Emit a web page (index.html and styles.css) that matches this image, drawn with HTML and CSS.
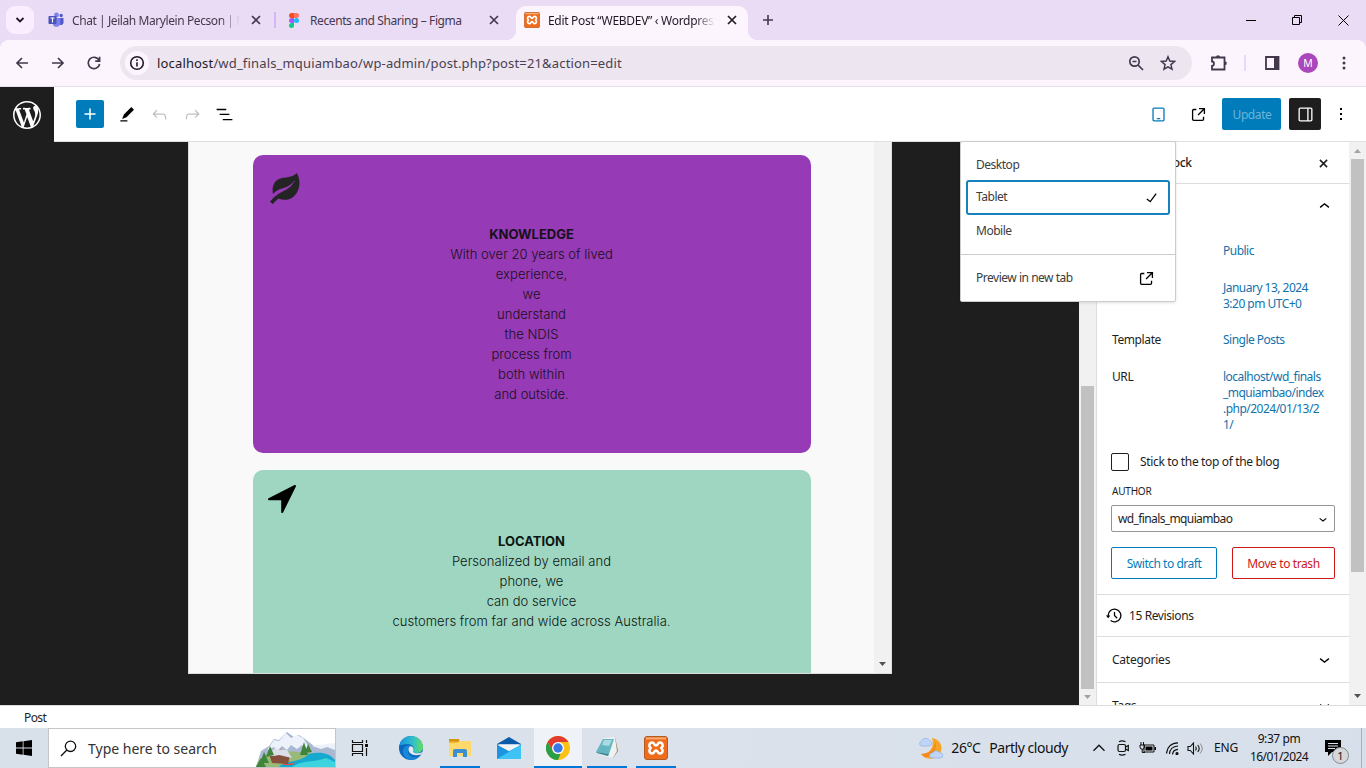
FILE: index.html
```html
<!DOCTYPE html>
<html lang="en">
<head>
<meta charset="utf-8">
<title>Edit Post “WEBDEV” ‹ Wordpress</title>
<link rel="stylesheet" href="styles.css">
</head>
<body>
<svg class="defs" width="0" height="0" aria-hidden="true">
  <symbol id="external" viewBox="0 0 24 24"><path d="M19.5 4.5h-7V6h4.44l-5.97 5.97 1.06 1.06L18 7.06v4.44h1.5v-7Zm-13 1a2 2 0 0 0-2 2v10a2 2 0 0 0 2 2h10a2 2 0 0 0 2-2v-3H17v3a.5.5 0 0 1-.5.5h-10a.5.5 0 0 1-.5-.5v-10a.5.5 0 0 1 .5-.5h3V5.5h-3Z"/></symbol>
  <symbol id="down" viewBox="0 0 24 24"><path d="M17.5 11.6L12 16l-5.5-4.4.9-1.2L12 14l4.5-3.6 1 1.2z"/></symbol>
  <symbol id="cross" viewBox="0 0 10 10"><path d="M1 1l8 8M9 1l-8 8" fill="none" stroke="currentColor" stroke-width="1.7"/></symbol>
  <symbol id="xampp" viewBox="0 0 24 24"><rect x=".5" y=".5" width="23" height="23" rx="2.5" fill="#ee6c1b" stroke="#b65a20"/><path d="M2 1.5h20v1.8H2z" fill="#f7b07c"/><path d="M8.200 6.500c-3 0-3.700 3.500-1.700 5.500-2 2-1.300 5.500 1.700 5.500 2.300 0 1.800-3 3.800-3s1.500 3 3.800 3c3 0 3.700-3.500 1.700-5.500 2-2 1.300-5.500-1.700-5.500-2.300 0-1.800 3-3.800 3s-1.500-3-3.800-3z" fill="none" stroke="#fff" stroke-width="2.600"/></symbol>
</svg>

<div class="tabstrip">
  <div class="tab-search"><svg width="10" height="8" viewBox="0 0 10 8"><path d="M1.500 2L5 5.500 8.500 2" fill="none" stroke="#1f1a26" stroke-width="1.800"/></svg></div>
  <div class="tab tab-teams">
    <svg width="16" height="16" viewBox="0 0 16 16"><circle cx="8.500" cy="3" r="2.400" fill="#7b83eb"/><circle cx="13.200" cy="3.500" r="1.700" fill="#5059c9"/><path d="M11 6h4.500v5a2.500 2.500 0 01-4.500 1z" fill="#5059c9"/><path d="M5 6h7.300v5.500a4 4 0 01-7.300 1.500z" fill="#7b83eb"/><rect x=".5" y="4" width="8" height="8" rx=".8" fill="#4b53bc"/><path d="M2.500 6h4M4.500 6v4.500" stroke="#fff" stroke-width="1.100"/></svg>
    <span class="tab-title fade t-chat">Chat | Jeilah Marylein Pecson | M</span>
    <svg class="x" width="10" height="10"><use href="#cross"/></svg>
  </div>
  <i class="tab-sep"></i>
  <div class="tab tab-figma">
    <svg width="10" height="15" viewBox="0 0 10 15"><path d="M5 0H2.500a2.500 2.500 0 000 5H5z" fill="#f24e1e"/><path d="M5 0h2.500a2.500 2.500 0 010 5H5z" fill="#ff7262"/><path d="M5 5H2.500a2.500 2.500 0 000 5H5z" fill="#a259ff"/><circle cx="7.500" cy="7.500" r="2.500" fill="#1abcfe"/><path d="M5 10H2.500A2.500 2.500 0 105 12.500z" fill="#0acf83"/></svg>
    <span class="tab-title t-figma">Recents and Sharing – Figma</span>
    <svg class="x" width="10" height="10"><use href="#cross"/></svg>
  </div>
  <div class="tab tab-active">
    <svg width="16" height="16"><use href="#xampp"/></svg>
    <span class="tab-title fade t-edit">Edit Post “WEBDEV” ‹ Wordpress</span>
    <svg class="x" width="10" height="10"><use href="#cross"/></svg>
  </div>
  <svg class="newtab" width="12" height="12" viewBox="0 0 12 12"><path d="M6 1v10M1 6h10" stroke="#44394c" stroke-width="1.600"/></svg>
  <div class="window-buttons">
    <svg width="10" height="10"><path d="M0 5.500h10" stroke="#000"/></svg>
    <svg width="10" height="10" fill="none" stroke="#000"><path d="M.5 2.500h7v7h-7zM2.500 2.500v-2h7v7h-2"/></svg>
    <svg width="11" height="11" stroke="#000"><path d="M.5.5l10 10M10.500.5l-10 10"/></svg>
  </div>
</div>

<div class="toolbar">
  <svg width="14" height="14" viewBox="0 0 14 14" class="ln"><path d="M13 7H2M7 2L2 7l5 5"/></svg>
  <svg width="14" height="14" viewBox="0 0 14 14" class="ln"><path d="M1 7h11M7 2l5 5-5 5"/></svg>
  <svg width="14" height="14" viewBox="0 0 14 14" class="ln"><path d="M12 4.200A5.700 5.700 0 1012.600 8M12.600.8v4.400H8.200"/></svg>
  <div class="omnibox">
    <span class="info"><svg width="16" height="16" viewBox="0 0 16 16" fill="none" stroke="#1f1a26" stroke-width="1.600"><circle cx="8" cy="8" r="6.300"/><path d="M8 7.200V11.500M8 4.300v1.600"/></svg></span>
    <span class="url"><b>localhost</b>/wd_finals_mquiambao/wp-admin/post.php?post=21&amp;action=edit</span>
    <svg class="ln" width="16" height="16" viewBox="0 0 16 16"><circle cx="6.500" cy="6.500" r="4.700"/><path d="M10 10l5 5M4.500 6.500h4"/></svg>
    <svg class="ln star" width="16" height="16" viewBox="0 0 16 16"><path d="M8 1.800l1.800 4.300 4.700.4-3.600 3.100 1.100 4.600L8 11.800l-4 2.400 1.100-4.600-3.600-3.100 4.700-.4z"/></svg>
  </div>
  <svg class="ln puzzle" width="18" height="18" viewBox="0 0 18 18"><path d="M2 3.500h12.500v12H2v-3.700c2.600-.2 2.600-4.100 0-4.300z"/><path d="M6 3.200a2 2 0 014 0zM14.800 7.200a2 2 0 010 4z" fill="#44394c" stroke="none"/></svg>
  <i class="tool-sep"></i>
  <svg class="panel" width="15" height="14" viewBox="0 0 15 14"><path d="M1 1h12.500v12H1z" fill="none" stroke="#44394c" stroke-width="1.800"/><path d="M9 1h5v12H9z" fill="#44394c"/></svg>
  <span class="avatar">M</span>
  <svg class="kebab" width="4" height="14" viewBox="0 0 4 14"><circle cx="2" cy="2" r="1.500"/><circle cx="2" cy="7" r="1.500"/><circle cx="2" cy="12" r="1.500"/></svg>
</div>

<div class="wp-header">
  <div class="wp-logo"><svg width="28" height="28" viewBox="0 0 20 20" fill="#fff"><path d="M20 10c0-5.510-4.490-10-10-10C4.480 0 0 4.490 0 10c0 5.520 4.480 10 10 10 5.510 0 10-4.480 10-10zM7.780 15.370L4.370 6.220c.55-.02 1.170-.08 1.170-.08.5-.06.44-1.130-.06-1.110 0 0-1.450.11-2.370.11-.18 0-.37 0-.58-.01C4.120 2.690 6.870 1.110 10 1.110c2.330 0 4.450.87 6.050 2.340-.68-.11-1.650.39-1.650 1.580 0 .74.45 1.360.9 2.100.35.61.55 1.360.55 2.460 0 1.490-1.400 5-1.400 5l-3.030-8.370c.54-.02.82-.17.82-.17.5-.05.44-1.250-.06-1.220 0 0-1.440.12-2.380.12-.87 0-2.330-.12-2.330-.12-.5-.03-.56 1.200-.06 1.220l.92.08 1.260 3.410zM17.410 10c.24-.64.74-1.870.43-4.250.7 1.290 1.050 2.710 1.050 4.250 0 3.290-1.730 6.240-4.400 7.780.97-2.590 1.940-5.200 2.920-7.780zM6.100 18.090C3.120 16.650 1.110 13.530 1.110 10c0-1.300.23-2.480.72-3.590C3.250 10.300 4.670 14.200 6.100 18.090zm4.030-6.630l2.580 6.980c-.86.29-1.760.45-2.710.45-.79 0-1.570-.11-2.290-.33.81-2.380 1.620-4.740 2.420-7.100z"/></svg></div>
  <div class="edit-tools">
    <button class="add"><svg width="12" height="12"><path d="M6 .5v11M.5 6h11" stroke="#fff" stroke-width="1.500"/></svg></button>
    <svg class="pencil" width="21" height="21" viewBox="0 0 24 24"><path d="M20.500 6.500l-3-3-8.500 8.500-2 5 5-2 8.500-8.500ZM13 18.500H5V20h8v-1.500Z"/></svg>
    <svg class="off" width="21" height="21" viewBox="0 0 24 24"><path d="M18.300 11.700c-.6-.6-1.400-.9-2.300-.9H6.700l2.900-3.300-1.100-1-4.500 5L8.500 16l1-1-2.700-2.700H16c.5 0 .9.200 1.300.5 1 1 1 3.400 1 4.500v.3h1.500v-.2c0-1.500 0-4.300-1.500-5.700z"/></svg>
    <svg class="off" width="21" height="21" viewBox="0 0 24 24"><path d="M15.600 6.500l-1.100 1 2.900 3.300H8c-.9 0-1.700.3-2.300.9-1.400 1.500-1.400 4.200-1.400 5.600v.2h1.500v-.3c0-1.100 0-3.500 1-4.500.3-.3.7-.5 1.300-.5h9.200L14.500 15l1.100 1.100 4.600-4.600-4.600-5z"/></svg>
    <svg class="outline" width="21" height="21" viewBox="0 0 24 24"><path d="M3 5.500h11V7H3V5.500Zm3.500 5.500h11v1.700h-11V11ZM21 17H10v1.700h11V17Z"/></svg>
  </div>
  <div class="view-tools">
    <svg class="tablet" width="21" height="21" viewBox="0 0 24 24"><path d="M17 4H7c-1.100 0-2 .9-2 2v12c0 1.100.9 2 2 2h10c1.100 0 2-.9 2-2V6c0-1.100-.9-2-2-2zm.5 14c0 .3-.2.5-.5.5H7c-.3 0-.5-.2-.5-.5V6c0-.3.2-.5.5-.5h10c.3 0 .5.2.5.5v12zm-7.500-.5h4V16h-4v1.500z"/></svg>
    <svg class="ext" width="21" height="21"><use href="#external"/></svg>
    <button class="update"><span>Update</span></button>
    <button class="settings"><svg width="21" height="21" viewBox="0 0 24 24" fill="#fff"><path d="M18 4H6c-1.100 0-2 .9-2 2v12c0 1.100.9 2 2 2h12c1.100 0 2-.9 2-2V6c0-1.100-.9-2-2-2zm-4 14.500H6c-.3 0-.5-.2-.5-.5V6c0-.3.2-.5.5-.5h8v13zm4.500-.5c0 .3-.2.5-.5.5h-2.500v-13H18c.3 0 .5.200.5.5v12z"/></svg></button>
    <svg class="more" width="4" height="14"><path d="M1 1h2v2H1zM1 6h2v2H1zM1 11h2v2H1z"/></svg>
  </div>
  <div class="menu">
    <div class="item">Desktop</div>
    <div class="item chosen">Tablet<svg width="21" height="21" viewBox="0 0 24 24"><path d="M16.700 7.100l-6.300 8.500-3.300-2.500-.9 1.200 4.500 3.400L17.900 8z"/></svg></div>
    <div class="item mobile">Mobile</div>
    <div class="item preview">Preview in new tab<svg width="21" height="21"><use href="#external"/></svg></div>
  </div>
</div>

<div class="main">
  <div class="canvas">
    <div class="frame">
      <div class="page">
        <section class="card purple">
          <svg class="leaf" width="30" height="31" viewBox="0 0 30 31"><path d="M26.800 0c3.400 6 3.800 13.600-.3 20.200-4.300 6.500-11.300 8.200-18.200 5.300L2.700 31 0 28.800c3.500-4.700 7.700-7.800 13.300-10.500 5-2.500 9.600-5.900 11.800-11.600C21.500 12 17.100 14 12 15.600c-4 1.300-6.800 3-9 5.300C1.700 14.400 3.600 8.600 9 6.100 14.800 3.700 22.500 4.900 26.800 0z" fill="#242424"/></svg>
          <h3>KNOWLEDGE</h3>
          <p>With over 20 years of lived<br>experience,<br>we<br>understand<br>the NDIS<br>process from<br>both within<br>and outside.</p>
        </section>
        <section class="card green">
          <svg class="arrow" width="28" height="28" viewBox="0 0 28 28"><path d="M1 14.200L27 1 14.200 27V14.200z" stroke="#000" stroke-width="2" stroke-linejoin="round"/></svg>
          <h3>LOCATION</h3>
          <p>Personalized by email and<br>phone, we<br>can do service<br>customers from far and wide across Australia.</p>
        </section>
      </div>
      <div class="bar frame-bar"><svg width="7" height="4"><path d="M0 0h7L3.500 4z" fill="#505050"/></svg></div>
    </div>
  </div>
  <div class="bar canvas-bar"><i></i><svg width="7" height="4"><path d="M0 0h7L3.500 4z" fill="#a3a3a3"/></svg></div>
  <aside class="sidebar">
    <div class="side-tabs"><span>Post</span><span class="block">Block</span><svg width="9" height="9" viewBox="0 0 10 10"><use href="#cross"/></svg></div>
    <div class="summary">
      <div class="summary-head"><span>Summary</span><svg width="21" height="21" viewBox="0 0 24 24"><path d="M6.500 12.400L12 8l5.500 4.400-.9 1.200L12 10l-4.500 3.600-1-1.200z"/></svg></div>
      <div class="row r-vis"><span>Visibility</span><a>Public</a></div>
      <div class="row r-pub"><span>Publish</span><a>January 13, 2024<br>3:20 pm UTC+0</a></div>
      <div class="row r-tpl"><span>Template</span><a>Single Posts</a></div>
      <div class="row r-url"><span>URL</span><a>localhost/wd_finals<br>_mquiambao/index<br>.php/2024/01/13/2<br>1/</a></div>
      <div class="stick"><i></i><span>Stick to the top of the blog</span></div>
      <div class="author-label">AUTHOR</div>
      <div class="select"><span>wd_finals_mquiambao</span><svg width="16" height="16"><use href="#down"/></svg></div>
      <div class="actions"><button class="draft">Switch to draft</button><button class="trash">Move to trash</button></div>
    </div>
    <div class="revisions"><svg width="21" height="21" viewBox="0 0 24 24"><path d="M5.500 12h1.750l-2.500 3-2.500-3H4a8 8 0 113.134 6.350l.907-1.194A6.500 6.500 0 105.500 12zm9.530 1.970l-2.280-2.280V8.500a.75.75 0 00-1.500 0V12a.747.747 0 00.218.529l2.500 2.500a.75.75 0 101.060-1.061z"/></svg><span>15 Revisions</span></div>
    <div class="fold"><span>Categories</span><svg width="21" height="21"><use href="#down"/></svg></div>
    <div class="fold"><span>Tags</span><svg width="21" height="21"><use href="#down"/></svg></div>
  </aside>
  <div class="bar side-bar"><svg width="7" height="4"><path d="M0 4h7L3.500 0z" fill="#a3a3a3"/></svg><i></i><svg class="end" width="7" height="4"><path d="M0 0h7L3.500 4z" fill="#505050"/></svg></div>
</div>

<div class="crumbs"><span>Post</span></div>

<div class="taskbar">
  <div class="start"><svg width="16" height="16" viewBox="0 0 16 16"><path d="M0 2.200L6.700 1.300v6.300H0zM7.500 1.200L16 0v7.600H7.500zM0 8.400h6.700v6.300L0 13.800zM7.500 8.400H16V16l-8.500-1.200z"/></svg></div>
  <div class="search">
    <svg width="17" height="17" viewBox="0 0 17 17" fill="none" stroke="#111" stroke-width="1.300"><circle cx="10.500" cy="6.300" r="5.200"/><path d="M6.800 10L1 16"/></svg>
    <span>Type here to search</span>
    <svg class="scene" width="79" height="35" viewBox="0 0 79 35"><path d="M0 35L5 19l8-5 5-7 5 1 8-8 7 5 5-2 6 4 9 7 22-2v23z" fill="#aab8d2"/><path d="M18 8l-7 10 7-3 3 4 5-5 5 4 4-5 6 4 5-4 9 5-8-12-6-3-6 3-5-5-7 8zM56 14l23-3v7l-8-3-6 2z" fill="#edf1fa"/><path d="M0 35c4-15 18-18 56-14l-7 14z" fill="#98b978"/><path d="M23 35c6-8 20-3 30-13 10-3 21-1 26 6v7z" fill="#16a9cf"/><path d="M36 35c9-7 26-5 34-9l9 4v5z" fill="#3dd4df"/><path d="M13 22l12-5 9 6-2 9-16-1z" fill="#85513c"/><path d="M11 24l7-7 13 1 5 8-13-3-5 1z" fill="#dbe0e8"/><path d="M26 31c4 2 8 1 13-1l-3 3h-8z" fill="#eb4632"/><path d="M4 31l4-11 5 11zM10 25l4-11 4 9zM44 23l4-13 4 13zM49 21l3-9 4 8zM0 35l5-9 5 9z" fill="#3e853b"/></svg>
  </div>
  <div class="task taskview"><svg width="18" height="16" viewBox="0 0 18 16" fill="none" stroke="#111" stroke-width="1.200"><path d="M1.500 4.500h10v7h-10zM1.500 0v2.500h10V0M1.500 16v-2.500h10V16M15.500 0v3M15.500 8v8"/><path d="M14 4h3v3h-3z" fill="#111" stroke="none"/></svg></div>
  <div class="task"><svg width="24" height="24" viewBox="0 0 24 24"><defs><linearGradient id="eg" x1="0" x2="1"><stop offset=".1" stop-color="#1a9bdc"/><stop offset=".6" stop-color="#35c1c8"/><stop offset="1" stop-color="#62e05d"/></linearGradient></defs><circle cx="12" cy="12" r="12" fill="#0b67bd"/><path d="M.6 9C2.500 2.800 7 0 12 0c7 0 12 5.500 12 11 0 4-3 6-6.500 6-3 0-4.500-1-3.600-2.400C16 12 13.500 8 8.500 8 5 8 2 9.500.6 9z" fill="url(#eg)"/><path d="M9.500 12.500C7 18 13 23.500 20 20.500c-4 5-13 4.300-15.500-2C2.500 13 6 9 11 9.300c-1 .7-1.300 2-1.500 3.200z" fill="#1688d8"/><path d="M10.500 10.500c-3.500 5 2.500 11 11.500 8l1.500-2.500c-4 2-9 1.500-9.600-.5-.2-.8.800-1.200.5-2.700-.3-1.800-2-3.300-3.900-2.300z" fill="#e2e9f0"/></svg></div>
  <div class="task run"><svg width="22" height="20" viewBox="0 0 22 20"><path d="M0 2a1 1 0 011-1h8l2 2h10a1 1 0 011 1v14H0z" fill="#f4b92b"/><path d="M0 1h10v2.500H0z" fill="#d39510"/><path d="M0 5h8l3-2h11v15H0z" fill="#ffd96b"/><path d="M4 19v-6a2 2 0 012-2h10a2 2 0 012 2v6h-4v-4H8v4z" fill="#3a8fd4"/></svg></div>
  <div class="task"><svg width="24" height="24" viewBox="0 0 24 24"><path d="M0 8l12-7 12 7v8H0z" fill="#0a5cab"/><path d="M2 8.500h20V15H2z" fill="#fff"/><path d="M0 8.500l12 6.500 12-6.500V23H0z" fill="#1b95e0"/><path d="M24 8.500L0 23h24z" fill="#3dc3f5"/><path d="M0 8.500h24L12 15z" fill="#f1f5f8"/></svg></div>
  <div class="task run current"><svg width="24" height="24" viewBox="0 0 24 24"><circle cx="12" cy="12" r="12" fill="#fbc116"/><path d="M1.600 6A12 12 0 0122.400 6H12l-5.200 9z" fill="#e33b2e"/><path d="M1.600 6l5.200 9a6 6 0 005.200 3h2.500L12 24A12 12 0 011.600 6z" fill="#2b9e48"/><circle cx="12" cy="12" r="6" fill="#fff"/><circle cx="12" cy="12" r="4.700" fill="#3878e7"/></svg></div>
  <div class="task run note"><svg width="24" height="22" viewBox="0 0 24 22"><path d="M20 0l3 14-5 7-2-2z" fill="#927b52"/><path d="M9 1l11-1 2 14-4 7-12-3z" fill="#edf2f2"/><path d="M8 2h11l-5 15-13-2z" fill="#65b5c2"/><path d="M9 3h8l-3 6-7-1z" fill="#a9dce2"/><path d="M1 15l13 2-1 2-11-3z" fill="#34818e"/></svg></div>
  <div class="task run"><svg width="24" height="24"><use href="#xampp"/></svg></div>
  <div class="weather">
    <svg width="25" height="23" viewBox="0 0 25 23"><path d="M13 1c8 1 12 9 8 15-4 7-14 8-19 1 8 0 14-6 11-16z" fill="#f5a623"/><path d="M2 17c8 0 14-5 14-13 3 7-1 15-10 16.500z" fill="#f68a1d"/><path d="M2 9a2.800 2.800 0 01.5-5 4.500 4.500 0 018-.5A2.900 2.900 0 0111 9zM13 21a2.500 2.500 0 01.3-5 4.500 4.500 0 017.700 0 2.500 2.500 0 01.5 5z" fill="#bfd5f7" stroke="#86a9e2" stroke-width=".6"/></svg>
    <span class="temp">26°C</span><span class="cond">Partly cloudy</span>
  </div>
  <div class="tray">
    <svg width="12" height="8" fill="none" stroke="#111" stroke-width="1.300"><path d="M.5 6.800L6 1.200l5.500 5.600"/></svg>
    <svg class="cam" width="12" height="16" viewBox="0 0 12 16" fill="none" stroke="#111" stroke-width="1.200"><rect x="1" y="4.500" width="7.500" height="7" rx="1.500"/><path d="M8.500 7l2.800-1.500v5L8.500 9M2 1.800Q5 0 8.500 1.800M2 14.200Q5 16 8.500 14.200"/></svg>
    <svg class="bat" width="17" height="12" viewBox="0 0 17 12"><path d="M5 3h10v7H5z" fill="none" stroke="#111"/><path d="M6.500 4.500h7v4h-7zM15.500 5H17v3h-1.500z"/><path d="M2 0v3M4.500 0v3M1 3h4.500v2a2 2 0 01-4.500 0zM3.200 7v3.500H6" fill="none" stroke="#111"/></svg>
    <svg class="wifi" width="13" height="13" viewBox="0 0 13 13" fill="none" stroke="#111" stroke-width="1.200"><path d="M.5 11.500C1 5 5.500 1 12 .8M3.500 12c.3-4.500 3.500-7.700 8.500-8M6.500 12.500c.3-3 2.500-5 5.500-5.200"/><circle cx="11" cy="11.500" r="1" fill="#111"/></svg>
    <svg class="vol" width="17" height="13" viewBox="0 0 17 13" fill="none" stroke="#111" stroke-width="1.100"><path d="M1 4.500h2.300L6.500 1v11L3.300 8.500H1zM8.500 4.500q1.500 2 0 4M10.700 3q3 3.500 0 7"/><path d="M13 1.500q4.500 5 0 10" stroke="#999"/></svg>
    <span class="lang">ENG</span>
    <div class="clock"><span class="time">9:37 pm</span><span class="date">16/01/2024</span></div>
    <div class="notes"><svg width="17" height="16" viewBox="0 0 17 16"><path d="M0 0h16v12H7l-4 4v-4H0z"/><path d="M3 3.500h10M3 6h10M3 8.500h7" stroke="#dce3ec"/></svg><span class="badge">1</span></div>
    <i class="peek"></i>
  </div>
</div>
</body>
</html>
```
FILE: styles.css
```css
* { box-sizing: border-box; }
body { margin: 0; width: 1366px; height: 768px; overflow: hidden; background: #fff; font: 12px/16px "Noto Sans", "Open Sans", sans-serif; color: #1e1e1e; }
svg { display: block; flex: none; }
button { font: inherit; margin: 0; padding: 0; border: 0; display: flex; align-items: center; justify-content: center; }
.defs { position: absolute; }
span, a { white-space: nowrap; }

.tabstrip { height: 40px; background: #ebdcf5; display: flex; align-items: center; padding-left: 6px; color: #44394c; }
.tab-search { width: 28px; height: 28px; border-radius: 9px; background: #faeefe; display: flex; align-items: center; justify-content: center; margin-right: 14px; }
.tab { display: flex; align-items: center; height: 40px; }
.tab-title { margin-left: 8px; overflow: hidden; line-height: 18px; padding-top: 1px; }
.fade { -webkit-mask-image: linear-gradient(90deg, #000 88%, transparent); }
.x { margin-left: auto; }
.tab-teams { width: 213px; }
.t-chat { width: 168px; letter-spacing: -.42px; }
.tab-sep { width: 2px; height: 16px; background: #d3b6f8; margin-left: 13px; }
.tab-figma { width: 210px; margin-left: 13px; }
.t-figma { margin-left: 11px; letter-spacing: -.4px; }
.tab-active { width: 232px; height: 34px; align-self: flex-end; background: #fdf5fe; border-radius: 10px 10px 0 0; margin-left: 17px; padding: 0 11px 6px 8px; position: relative; color: #1f1a26; }
.tab-active::before, .tab-active::after { content: ""; position: absolute; bottom: 0; width: 10px; height: 10px; }
.tab-active::before { left: -10px; background: radial-gradient(circle at 0 0, transparent 10px, #fdf5fe 10.5px); }
.tab-active::after { right: -10px; background: radial-gradient(circle at 100% 0, transparent 10px, #fdf5fe 10.5px); }
.t-edit { width: 167px; letter-spacing: -.3px; }
.newtab { margin-left: 14px; }
.window-buttons { margin-left: auto; display: flex; align-items: center; gap: 36px; padding-right: 17px; }

.toolbar { height: 47px; background: radial-gradient(circle at 100% 100%, #fdf5fe 7.5px, #ebdcf5 8px) 0 0/8px 8px no-repeat, radial-gradient(circle at 0 100%, #fdf5fe 7.5px, #ebdcf5 8px) 100% 0/8px 8px no-repeat, #fdf5fe; border-bottom: 1px solid #e6deea; display: flex; align-items: center; padding-left: 15px; }
.ln { fill: none; stroke: #44394c; stroke-width: 1.7; margin-right: 22px; }
.omnibox { width: 1072px; height: 34px; border-radius: 17px; background: #ede5f0; display: flex; align-items: center; padding-left: 5px; margin-left: -3px; }
.info { width: 24px; height: 24px; border-radius: 50%; background: #fdf5fe; display: flex; align-items: center; justify-content: center; }
.url { margin: 0 auto 0 8px; font-size: 13px; color: #4a4150; letter-spacing: .16px; }
.url b { font-weight: 400; color: #1f1a26; }
.omnibox .ln { margin-right: 16px; }
.omnibox .star { stroke-width: 1.5; }
.puzzle { margin: 0 0 0 18px; stroke-width: 1.8; }
.tool-sep { width: 2px; height: 16px; background: #e9d8fb; margin-left: 16px; }
.panel { margin-left: 19px; }
.avatar { width: 20px; height: 20px; border-radius: 50%; background: #aa47bc; color: #fff; font-size: 10.5px; line-height: 20px; text-align: center; margin-left: 18px; }
.kebab { margin-left: 24px; fill: #44394c; }

.wp-header { height: 55px; border-bottom: 1px solid #dfdfdf; display: flex; align-items: center; position: relative; background: #fff; }
.wp-logo { width: 54px; height: 55px; background: #1e1e1e; display: flex; align-items: center; justify-content: center; align-self: flex-start; flex: none; }
.edit-tools { display: flex; align-items: center; gap: 12px; margin-left: 22px; }
.add { width: 28px; height: 28px; background: #007cba; border-radius: 2px; }
.off { fill: #c0c0c0; }
.outline { margin-left: -1px; }
.view-tools { display: flex; align-items: center; margin-left: auto; padding-right: 23px; }
.tablet { fill: #007cba; }
.ext { margin-left: 19px; }
.update { width: 59px; height: 32px; background: #007cba; border-radius: 2px; color: #6cb3d8; margin-left: 13px; padding: 2px 0 0 1px; letter-spacing: -.4px; }
.settings { width: 32px; height: 32px; background: #1e1e1e; border-radius: 2px; margin-left: 8px; }
.more { margin-left: 18px; }
.menu { position: absolute; left: 960px; top: 54px; width: 216px; height: 161px; background: #fff; border: 1px solid #ccc; border-radius: 2px; box-shadow: 0 1px 3px rgba(0,0,0,.12); padding: 7px 5px 0; z-index: 3; color: #3c3c3c; display: flex; flex-direction: column; }
.item { height: 31px; padding: 2px 9px 0 10px; display: flex; align-items: center; justify-content: space-between; letter-spacing: -.48px; }
.chosen { height: 36px; border: 2px solid #1582bd; border-radius: 3px; padding: 0 6px 0 8px; }
.mobile { height: 32px; padding-top: 0; }
.preview { border-top: 1px solid #ccc; margin: 7px -5px 0; padding: 1px 18px 0 15px; height: 48px; }

.main { height: 563px; display: flex; }
.canvas { width: 1079px; background: #1e1e1e; padding-left: 188px; }
.frame { width: 704px; height: 532px; display: flex; background: #f9f9f9; border: solid #ddd; border-width: 0 1px 1px; overflow: hidden; }
.page { width: 685px; padding: 13px 63px 0 64px; display: flex; flex-direction: column; gap: 17px; }
.card { flex: none; height: 298px; border-radius: 10px; text-align: center; font: 13px/20px Inter, sans-serif; color: #17101c; }
.card h3, .card p { margin: 0; font-size: 13px; padding-right: 1px; }
.card h3 { font-weight: 700; }
.card p { font-weight: 300; letter-spacing: .03px; }
.purple { background: #963ab5; }
.green { background: #9fd6c1; color: #0b1712; }
.leaf { margin: 18px 0 20px 17px; }
.arrow { margin: 15px 0 18px 15px; }
.bar { width: 17px; background: #f1f1f1; display: flex; flex-direction: column; align-items: center; flex: none; }
.bar i { width: 13px; background: #c1c1c1; }
.frame-bar { justify-content: flex-end; padding-bottom: 7px; }
.canvas-bar i { height: 303px; margin: 244px 0 6px; }
.side-bar { padding-top: 7px; }
.side-bar i { height: 413px; margin-top: 6px; }
.side-bar .end { margin-top: 122px; }

.sidebar { width: 253px; border-left: 1px solid #ddd; overflow: hidden; letter-spacing: -.4px; }
.side-tabs { height: 42px; border-bottom: 1px solid #ddd; display: flex; align-items: center; padding: 1px 21px 0 14px; font-weight: 500; }
.block { margin-left: 28px; }
.side-tabs svg { margin-left: auto; }
.summary { padding-left: 15px; border-bottom: 1px solid #ddd; height: 411px; }
.summary-head { height: 43px; display: flex; align-items: center; justify-content: space-between; padding: 2px 14px 0 0; font-weight: 500; }
.row { display: grid; grid-template-columns: 111px 1fr; color: #1e1e1e; }
.row a { color: #1173ad; letter-spacing: -.52px; }
.r-vis { margin-top: 16px; }
.r-pub { margin-top: 21px; }
.r-tpl { margin-top: 20px; }
.r-url { margin-top: 21px; }
.stick { display: flex; align-items: center; margin: 20px 0 0 -1px; gap: 11px; height: 18px; letter-spacing: -.35px; }
.stick i { width: 18px; height: 18px; border: 1px solid #1e1e1e; border-radius: 2px; }
.author-label { font-size: 10px; margin-top: 12px; letter-spacing: -.2px; }
.select { width: 224px; height: 27px; border: 1px solid #949494; border-radius: 2px; display: flex; align-items: center; justify-content: space-between; padding: 0 3px 0 6px; margin: 6px 0 0 -1px; letter-spacing: -.62px; }
.actions { display: flex; gap: 15px; margin: 15px 0 0 -1px; }
.actions button { height: 32px; background: #fff; border: 1px solid #007cba; border-radius: 2px; color: #007cba; letter-spacing: -.48px; padding-top: 2px; }
.draft { width: 106px; }
.actions .trash { width: 103px; border-color: #cc1818; color: #cc1818; letter-spacing: -.4px; }
.revisions { height: 42px; border-bottom: 1px solid #ddd; display: flex; align-items: center; padding-left: 7px; gap: 4px; }
.fold { height: 46px; border-bottom: 1px solid #ddd; display: flex; align-items: center; justify-content: space-between; padding: 0 14px 0 15px; letter-spacing: -.25px; }

.crumbs { height: 23px; border-top: 1px solid #ddd; background: #fff; display: flex; align-items: center; padding: 2px 0 0 24px; letter-spacing: -.6px; }

.taskbar { height: 40px; background: linear-gradient(90deg, #d8e0e9, #dbe2ec 50%, #d7dfea); display: flex; color: #111; }
.start { width: 48px; display: flex; align-items: center; justify-content: center; }
.search { width: 288px; background: #fff; border: 1px solid #c3c5c8; display: flex; align-items: center; padding-left: 11px; overflow: hidden; }
.search span { margin: 1px auto 0 11px; font-size: 14px; color: #333; }
.scene { align-self: flex-end; }
.task { width: 48px; display: flex; align-items: center; justify-content: center; margin-right: 1px; position: relative; }
.taskview { margin-right: 3px; }
.run::after { content: ""; position: absolute; left: 4px; right: 4px; bottom: 0; height: 2px; background: #0078d7; }
.current { background: #eff3f8; }
.current::after { left: 0; right: 0; }
.weather { display: flex; align-items: center; margin-left: auto; font-size: 14px; letter-spacing: -.47px; }
.temp { margin-left: 7px; }
.cond { margin-left: 9px; }
.tray { display: flex; align-items: center; margin-left: 25px; }
.cam { margin-left: 12px; }
.bat { margin-left: 10px; }
.wifi { margin-left: 10px; }
.vol { margin-left: 8px; }
.lang { margin-left: 10px; width: 24px; letter-spacing: -.2px; }
.clock { width: 58px; margin-left: 12px; display: flex; flex-direction: column; align-items: center; line-height: 18px; letter-spacing: -.6px; }
.time { letter-spacing: -.4px; }
.notes { margin-left: 17px; width: 24px; height: 16px; position: relative; }
.badge { position: absolute; left: 7px; top: 7px; width: 17px; height: 17px; border: 1px solid #85898d; border-radius: 50%; background: #d5d7d9; line-height: 15px; font-size: 11px; text-align: center; }
.peek { width: 1px; height: 40px; background: #a9b0b8; margin-left: 12px; margin-right: 4px; }
```
